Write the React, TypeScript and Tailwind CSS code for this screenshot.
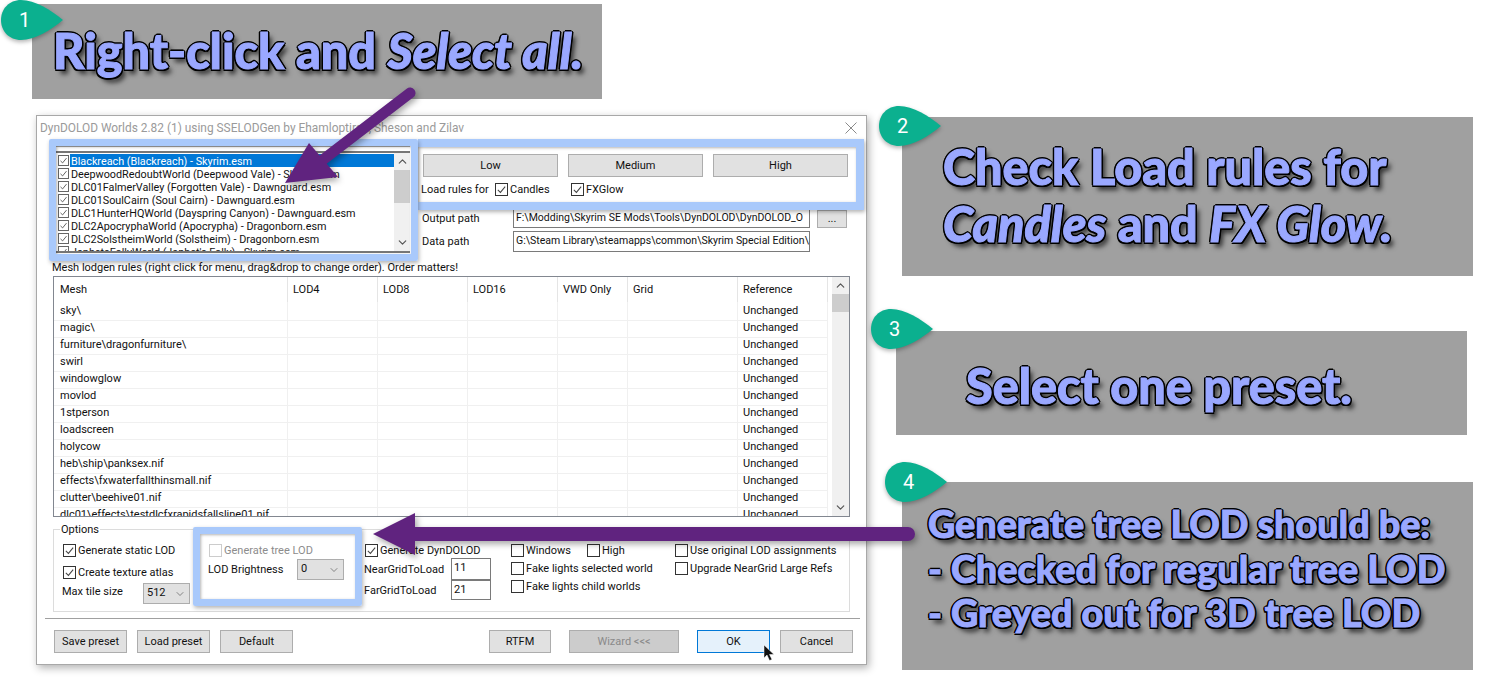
import { ChevronDown, ChevronUp } from "lucide-react";
import type { ReactNode } from "react";

const worlds = [
  "Blackreach (Blackreach) - Skyrim.esm",
  "DeepwoodRedoubtWorld (Deepwood Vale) - Skyrim.esm",
  "DLC01FalmerValley (Forgotten Vale) - Dawnguard.esm",
  "DLC01SoulCairn (Soul Cairn) - Dawnguard.esm",
  "DLC1HunterHQWorld (Dayspring Canyon) - Dawnguard.esm",
  "DLC2ApocryphaWorld (Apocrypha) - Dragonborn.esm",
  "DLC2SolstheimWorld (Solstheim) - Dragonborn.esm",
  "JaphetsFollyWorld (Japhet's Folly) - Skyrim.esm",
];

const meshes = [
  "sky\\",
  "magic\\",
  "furniture\\dragonfurniture\\",
  "swirl",
  "windowglow",
  "movlod",
  "1stperson",
  "loadscreen",
  "holycow",
  "heb\\ship\\panksex.nif",
  "effects\\fxwaterfallthinsmall.nif",
  "clutter\\beehive01.nif",
  "dlc01\\effects\\testdlcfxrapidsfallsline01.nif",
];

const columns = ["Mesh", "LOD4", "LOD8", "LOD16", "VWD Only", "Grid", "Reference"];
const gridCols = "grid grid-cols-[234px_90px_90px_90px_70px_110px_90px]";

function Check({ checked = false, disabled = false, small = false }: { checked?: boolean; disabled?: boolean; small?: boolean }) {
  return (
    <span
      className={`flex shrink-0 items-center justify-center border bg-white ${small ? "h-[11px] w-[11px] border-[#666666]" : "h-[13px] w-[13px]"} ${disabled ? "border-[#cccccc]" : small ? "" : "border-[#333333]"}`}
    >
      {checked && (
        <svg viewBox="0 0 12 12" className="h-full w-full" fill="none" stroke="#444444" strokeWidth="1.1">
          <path d="M2 6.5 4.8 9.2 10 2.8" />
        </svg>
      )}
    </span>
  );
}

function CheckRow({ label, checked, disabled, className = "" }: { label: string; checked?: boolean; disabled?: boolean; className?: string }) {
  return (
    <div className={`flex h-[13px] items-center gap-[2px] ${className}`}>
      <Check checked={checked} disabled={disabled} />
      <span className={`whitespace-nowrap pt-px ${disabled ? "text-[#8c8c8c]" : ""}`}>{label}</span>
    </div>
  );
}

function WinButton({ children, className = "" }: { children: ReactNode; className?: string }) {
  return (
    <div className={`flex h-[23px] items-center justify-center border border-[#adadad] bg-[#e1e1e1] pt-[2px] ${className}`}>
      {children}
    </div>
  );
}

function Combo({ value, className = "" }: { value: string; className?: string }) {
  return (
    <div className={`flex h-[21px] w-[47px] items-center justify-between border border-[#adadad] bg-[#e1e1e1] pl-[3px] pr-[3px] ${className}`}>
      <span>{value}</span>
      <ChevronDown size={12} strokeWidth={1.2} color="#444444" />
    </div>
  );
}

function Field({ value, className = "" }: { value: string; className?: string }) {
  return (
    <div className={`overflow-hidden whitespace-nowrap border border-[#7a7a7a] bg-white pl-[2px] leading-[17px] ${className}`}>
      {value}
    </div>
  );
}

function Badge({ n, className }: { n: number; className: string }) {
  return (
    <div className={`absolute z-30 h-[40px] w-[62px] ${className}`}>
      <svg viewBox="0 0 62 40" className="h-full w-full drop-shadow-[0_2px_2px_rgba(0,0,0,0.3)]">
        <path d="M20 0C34 0 50 10 62 20 50 30 34 40 20 40 8 40 0 31 0 20 0 9 8 0 20 0Z" fill="#0bb08f" />
      </svg>
      <span className="absolute left-[18px] top-[8px] text-[20px] leading-[24px] text-white">{n}</span>
    </div>
  );
}

const calloutText =
  "font-['Lato',sans-serif] font-black text-[#9aa8ff] [-webkit-text-stroke:1px_#9aa8ff] [text-shadow:2px_0_0_#000,-2px_0_0_#000,0_2px_0_#000,0_-2px_0_#000,1.5px_1.5px_0_#000,-1.5px_1.5px_0_#000,1.5px_-1.5px_0_#000,-1.5px_-1.5px_0_#000,4px_5px_5px_rgba(0,0,0,0.7)]";

export default function App() {
  return (
    <div className="relative h-[697px] w-[1493px] overflow-hidden bg-white font-['Roboto',sans-serif] text-[11px] text-[#111111]">
      {/* Callouts */}
      <div className="absolute left-[32px] top-[4px] h-[95px] w-[570px] bg-[#a0a0a0] pl-[21px] pt-[18px]">
        <p className={`${calloutText} whitespace-nowrap text-[48.5px] leading-[56px]`}>
          Right-click and <i>Select all.</i>
        </p>
      </div>
      <div className="absolute left-[902px] top-[117px] h-[159px] w-[571px] bg-[#a0a0a0] pl-[41px] pt-[21px]">
        <p className={`${calloutText} whitespace-nowrap text-[48.5px] leading-[57px]`}>
          Check Load rules for
          <br />
          <i>Candles</i> and <i>FX Glow.</i>
        </p>
      </div>
      <div className="absolute left-[896px] top-[331px] h-[104px] w-[571px] bg-[#a0a0a0] pl-[70px] pt-[26px]">
        <p className={`${calloutText} whitespace-nowrap text-[48.5px] leading-[56px]`}>Select one preset.</p>
      </div>
      <div className="absolute left-[902px] top-[482px] h-[188px] w-[571px] bg-[#a0a0a0] pl-[26px] pt-[20px]">
        <p className={`${calloutText} whitespace-nowrap text-[37.7px] leading-[44.5px]`}>
          Generate tree LOD should be:
          <br />- Checked for regular tree LOD
          <br />- Greyed out for 3D tree LOD
        </p>
      </div>

      <Badge n={1} className="left-[1px] top-0" />
      <Badge n={2} className="left-[879px] top-[106px]" />
      <Badge n={3} className="left-[871px] top-[309px]" />
      <Badge n={4} className="left-[885px] top-[462px]" />

      {/* Dialog window */}
      <div className="absolute left-[36px] top-[115px] flex h-[550px] w-[831px] flex-col border border-[#a8a8a8] bg-white shadow-[2px_3px_8px_rgba(0,0,0,0.3)]">
        <div className="flex h-[30px] shrink-0 items-start justify-between pl-[3px] pr-[9px] pt-[3px] text-[11.9px] leading-[18px] text-[#9a9a9a]">
          <span>DynDOLOD Worlds 2.82 (1) using SSELODGen by Ehamloptiran, Sheson and Zilav</span>
          <svg viewBox="0 0 12 12" className="mt-[3px] h-[12px] w-[12px]" fill="none" stroke="#8a8a8a" strokeWidth="1">
            <path d="M0.5 0.5 11.5 11.5M11.5 0.5 0.5 11.5" />
          </svg>
        </div>

        {/* World list and preset buttons */}
        <div className="flex h-[107px] shrink-0 pl-[19px]">
          <div className="flex h-[107px] w-[354px] flex-col overflow-hidden border-b-2 border-t border-b-[#777777] border-t-[#aaaaaa]">
            <div className="h-[6px] shrink-0 border-b-2 border-[#777777]" />
            <div className="flex min-h-0 flex-1">
              <div className="min-w-0 flex-1 overflow-hidden pl-[2px] pt-px text-[10.8px]">
                {worlds.map((w, i) => (
                  <div key={w} className="flex h-[13px] items-center gap-[1px]">
                    <Check checked small />
                    <span className={`h-[13px] flex-1 overflow-hidden whitespace-nowrap pl-px leading-[15px] ${i === 0 ? "bg-[#0078d7] text-white" : ""}`}>{w}</span>
                  </div>
                ))}
              </div>
              <div className="flex w-[16px] shrink-0 flex-col items-center justify-between bg-[#f0f0f0]">
                <div className="flex w-full flex-col items-center">
                  <ChevronUp size={13} strokeWidth={2.2} color="#555555" className="my-[2px]" />
                  <div className="h-[33px] w-full bg-[#cdcdcd]" />
                </div>
                <ChevronDown size={13} strokeWidth={2.2} color="#555555" className="mb-[2px]" />
              </div>
            </div>
          </div>

          <div className="ml-[11px] flex w-[428px] flex-col">
            <div className="ml-[2px] mt-[8px] flex gap-[10px]">
              <WinButton className="w-[135px]">Low</WinButton>
              <WinButton className="w-[135px]">Medium</WinButton>
              <WinButton className="w-[135px]">High</WinButton>
            </div>
            <div className="mt-[6px] flex h-[13px] items-center">
              <span className="w-[74px] whitespace-nowrap pt-px">Load rules for</span>
              <CheckRow label="Candles" checked className="w-[76px]" />
              <CheckRow label="FXGlow" checked />
            </div>
            <div className="ml-px mt-[13px] flex h-[19px] items-center">
              <span className="w-[91px] pt-px">Output path</span>
              <Field value="F:\Modding\Skyrim SE Mods\Tools\DynDOLOD\DynDOLOD_O" className="h-[19px] w-[297px] text-[10.5px] !leading-[15px]" />
              <WinButton className="ml-[7px] !h-[18px] w-[30px]">...</WinButton>
            </div>
            <div className="ml-px mt-[3px] flex h-[21px] items-center">
              <span className="w-[91px] pt-[2px]">Data path</span>
              <Field value="G:\Steam Library\steamapps\common\Skyrim Special Edition\" className="h-[21px] w-[297px] text-[10.5px] !leading-[18px]" />
            </div>
          </div>
        </div>

        {/* Mesh rules table */}
        <div className="ml-[15px] mt-[7px] h-[15px] shrink-0 leading-[15px]">
          Mesh lodgen rules (right click for menu, drag&amp;drop to change order). Order matters!
        </div>
        <div className="ml-[16px] mt-[1px] flex h-[241px] w-[797px] shrink-0 border border-[#828790]">
          <div className="min-w-0 flex-1 overflow-hidden">
            <div className={`${gridCols} h-[25px]`}>
              {columns.map((c, i) => (
                <div key={c} className={`flex items-center border-r border-[#e5e5e5] pt-px ${i === 0 ? "pl-[6px]" : "pl-[5px]"}`}>
                  {c}
                </div>
              ))}
            </div>
            {meshes.map((m) => (
              <div key={m} className={`${gridCols} h-[17px] leading-[18px]`}>
                <div className="whitespace-nowrap border-b border-r border-[#f0f0f0] pl-[6px]">{m}</div>
                <div className="border-b border-r border-[#f0f0f0]" />
                <div className="border-b border-r border-[#f0f0f0]" />
                <div className="border-b border-r border-[#f0f0f0]" />
                <div className="border-b border-r border-[#f0f0f0]" />
                <div className="border-b border-r border-[#f0f0f0]" />
                <div className="border-b border-r border-[#f0f0f0] pl-[5px]">Unchanged</div>
              </div>
            ))}
          </div>
          <div className="flex w-[17px] shrink-0 flex-col items-center justify-between bg-[#f0f0f0]">
            <div className="flex w-full flex-col items-center">
              <ChevronUp size={13} strokeWidth={2.2} color="#555555" className="my-[2px]" />
              <div className="h-[18px] w-full bg-[#cdcdcd]" />
            </div>
            <ChevronDown size={13} strokeWidth={2.2} color="#555555" className="mb-[2px]" />
          </div>
        </div>

        {/* Options group */}
        <div className="relative ml-[16px] mt-[12px] flex h-[83px] w-[797px] shrink-0 border border-[#dcdcdc]">
          <span className="absolute left-[6px] top-[-7px] bg-white px-px leading-[14px]">Options</span>
          <div className="ml-[9px] mt-[14px] flex w-[146px] shrink-0 flex-col">
            <CheckRow label="Generate static LOD" checked />
            <CheckRow label="Create texture atlas" checked className="mt-[9px]" />
            <div className="-ml-px mt-[4px] flex h-[21px] items-center">
              <span className="w-[81px] whitespace-nowrap pb-[3px]">Max tile size</span>
              <Combo value="512" />
            </div>
          </div>
          <div className="mt-[14px] flex w-[156px] shrink-0 flex-col">
            <CheckRow label="Generate tree LOD" disabled />
            <div className="-ml-px mt-[2px] flex h-[21px] items-center">
              <span className="w-[89px] whitespace-nowrap pt-[2px]">LOD Brightness</span>
              <Combo value="0" />
            </div>
          </div>
          <div className="mt-[14px] flex w-[146px] shrink-0 flex-col">
            <CheckRow label="Generate DynDOLOD" checked />
            <div className="-ml-px mt-[1px] flex h-[22px] items-center">
              <span className="w-[87px] whitespace-nowrap pt-[3px]">NearGridToLoad</span>
              <Field value="11" className="h-[22px] w-[40px]" />
            </div>
            <div className="-ml-px flex h-[20px] items-center">
              <span className="w-[87px] whitespace-nowrap pt-[3px]">FarGridToLoad</span>
              <Field value="21" className="h-[20px] w-[40px]" />
            </div>
          </div>
          <div className="mt-[14px] flex w-[164px] shrink-0 flex-col gap-[5px]">
            <div className="flex">
              <CheckRow label="Windows" className="w-[76px]" />
              <CheckRow label="High" />
            </div>
            <CheckRow label="Fake lights selected world" />
            <CheckRow label="Fake lights child worlds" />
          </div>
          <div className="mt-[14px] flex flex-col gap-[5px]">
            <CheckRow label="Use original LOD assignments" />
            <CheckRow label="Upgrade NearGrid Large Refs" />
          </div>
        </div>

        <div className="ml-[8px] mt-[6px] h-px w-[815px] shrink-0 bg-[#a0a0a0]" />

        {/* Footer buttons */}
        <div className="ml-[17px] mt-[11px] flex w-[799px] shrink-0">
          <WinButton className="w-[73px]">Save preset</WinButton>
          <WinButton className="ml-[10px] w-[73px]">Load preset</WinButton>
          <WinButton className="ml-[10px] w-[73px]">Default</WinButton>
          <WinButton className="ml-[196px] w-[62px]">RTFM</WinButton>
          <WinButton className="ml-[18px] w-[110px] !bg-[#cccccc] text-[#8a8a8a]">{"Wizard <<<"}</WinButton>
          <WinButton className="ml-[18px] w-[73px] !border-[#0078d7] !bg-[#e5f1fb]">OK</WinButton>
          <WinButton className="ml-[10px] w-[73px]">Cancel</WinButton>
        </div>
      </div>

      {/* Highlight boxes over the dialog */}
      <div className="absolute left-[418px] top-[139px] z-10 h-[71px] w-[446px] border-[8px] border-l-0 border-[#a9c9fb] shadow-[1px_2px_4px_rgba(0,0,0,0.3),inset_1px_1px_3px_rgba(0,0,0,0.3)]" />
      <div className="absolute left-[49px] top-[139px] z-10 h-[122px] w-[369px] rounded-[2px] border-[7px] border-[#a9c9fb] shadow-[1px_2px_4px_rgba(0,0,0,0.3),inset_1px_1px_3px_rgba(0,0,0,0.3)]" />
      <div className="absolute left-[193px] top-[527px] z-10 h-[79px] w-[169px] rounded-[2px] border-[7px] border-[#a9c9fb] shadow-[1px_2px_4px_rgba(0,0,0,0.3),inset_1px_1px_3px_rgba(0,0,0,0.3)]" />

      {/* Arrows and cursor */}
      <svg className="absolute left-0 top-0 z-20 h-[697px] w-[1493px] drop-shadow-[2px_3px_3px_rgba(0,0,0,0.35)]" viewBox="0 0 1493 697">
        <path d="M410 93 320 162" stroke="#60237f" strokeWidth="11" strokeLinecap="round" fill="none" />
        <path d="M285 183 309 143 338 177Z" fill="#60237f" />
        <path d="M908 534H410" stroke="#60237f" strokeWidth="14" strokeLinecap="round" fill="none" />
        <path d="M373 534 415 513V555Z" fill="#60237f" />
      </svg>
      <svg className="absolute left-[763px] top-[644px] z-20 h-[18px] w-[12px]" viewBox="0 0 12 18">
        <path d="M1 1V14L4 11 6.5 16.5 9 15.5 6.5 10.5H11Z" fill="#111111" stroke="#ffffff" strokeWidth="0.5" />
      </svg>
    </div>
  );
}
